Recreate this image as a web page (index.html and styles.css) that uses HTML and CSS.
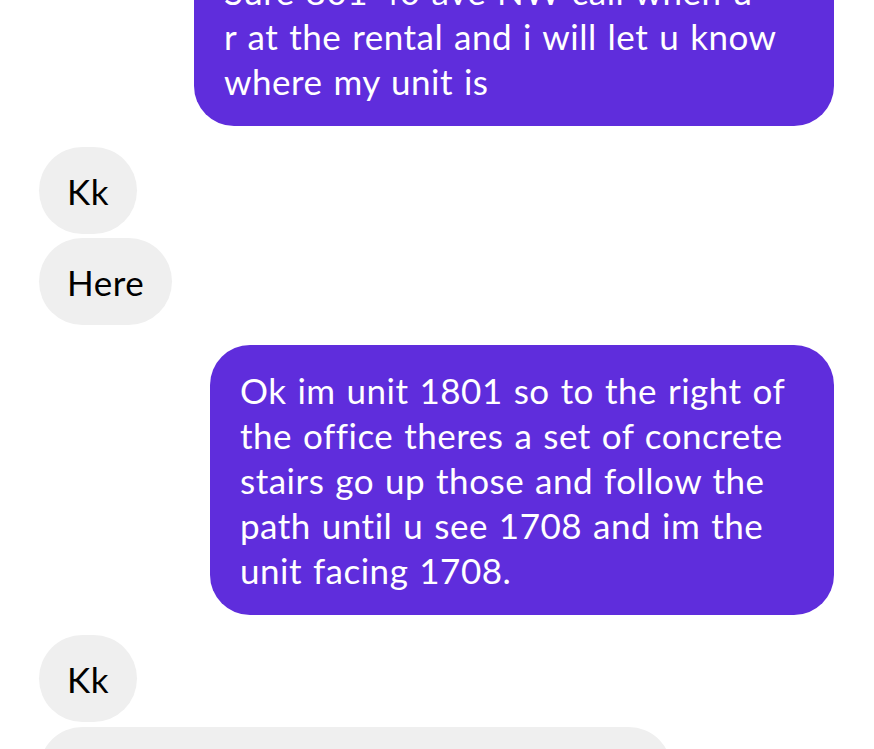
FILE: index.html
```html
<!DOCTYPE html>
<html lang="en">
<head>
  <meta charset="UTF-8">
  <meta name="viewport" content="width=device-width, initial-scale=1.0">
  <title>Messages</title>
  <link rel="stylesheet" href="styles.css">
</head>
<body>

  <div class="thread">
    <!-- mine -->
    <div class="group mine top">
      <p class="bubble">Sure 801 40 ave NW call when u<br>r at the rental and i will let u know where my unit is</p>
    </div>

    <!-- theirs -->
    <div class="group theirs">
      <p class="bubble">Kk</p>
      <p class="bubble">Here</p>
    </div>

    <div class="group mine">
      <p class="bubble wide">Ok im unit 1801 so to the right of the office theres a set of concrete stairs go up those and follow the path until u see 1708 and im the unit facing 1708.</p>
    </div>

    <div class="group theirs">
      <p class="bubble">Kk</p>
      <p class="bubble long">Sounds good</p>
    </div>
  </div>

</body>
</html>
```

FILE: styles.css
```css
/* whole page white, chat column */
body {
  margin: 0;
  background: #fff;
  font-family: Lato, "Noto Sans", sans-serif;
  overflow: hidden;
}

.thread {
  display: flex;
  flex-direction: column;
  gap: 20px;
  padding: 0 40px 0 39px;
}

.group {
  display: flex;
  flex-direction: column;
  gap: 4px;
}

/* first bubble is cut off by the top of the screen */
.group.top {
  margin-top: -54px;
  margin-bottom: 1px;
}

.bubble {
  margin: 0;
  padding: 22px 28px 20px;
  font-size: 35px;
  line-height: 45px;
  letter-spacing: 0.5px;
  word-spacing: 1.5px;
  border-radius: 44px;
  max-width: 580px;
}

.mine {
  align-items: flex-end;
}

.mine .bubble {
  background: #5f2ddc;
  color: #fff;
  padding: 23px 30px 22px;
  border-radius: 40px;
}

.mine .bubble.wide {
  max-width: 564px;
}

.theirs {
  align-items: flex-start;
}

.theirs .bubble {
  background: #efefef;
  color: #000;
}

.theirs .bubble.long {
  width: 577px;
  margin-top: 1px;
}
```
